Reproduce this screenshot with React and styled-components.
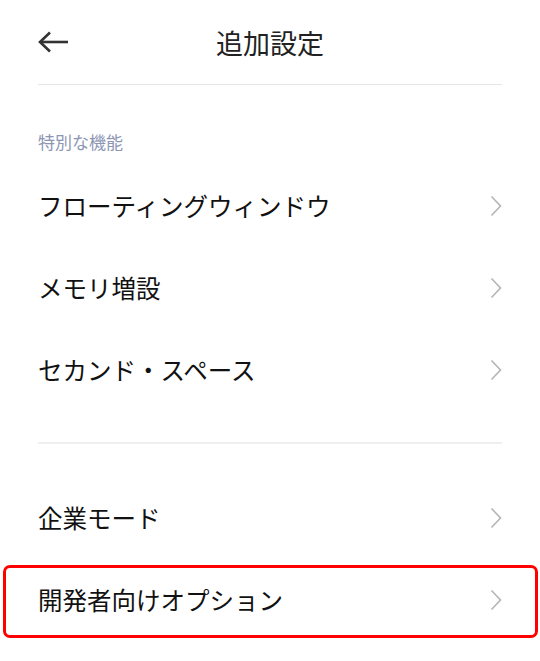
import React from 'react';
import styled, { createGlobalStyle } from 'styled-components';

const GlobalStyle = createGlobalStyle`
  body {
    margin: 0;
    background: #fff;
    font-family: "Noto Sans CJK JP", "Noto Sans", sans-serif;
  }
`;

const Page = styled.div`
  padding: 0 38px;
  width: 540px;
  box-sizing: border-box;
`;

const Header = styled.header`
  position: relative;
  height: 84px;
  display: flex;
  align-items: center;
  justify-content: center;
  border-bottom: 1px solid #e6e6e6;
`;

const BackButton = styled.div`
  position: absolute;
  left: 0;
  top: 31px;
  width: 31px;
  height: 22px;
  display: flex;
`;

const Title = styled.h1`
  margin: 0;
  font-size: 27px;
  font-weight: 400;
  color: #222;
  line-height: 1;
`;

const SectionLabel = styled.div`
  padding: 45px 0 11px;
  font-size: 17px;
  line-height: 24px;
  color: #8c95b4;
`;

const Row = styled.div`
  position: relative;
  height: 82px;
  display: flex;
  align-items: center;
  justify-content: space-between;
`;

const RowText = styled.span`
  font-size: 24.5px;
  color: #111;
  margin-top: -1px;
`;

const Divider = styled.div`
  height: 2px;
  background: #efefef;
  margin: ${(p) => p.$top}px 0 ${(p) => p.$bottom}px;
`;

const Highlight = styled.div`
  position: absolute;
  left: -35px;
  right: -36px;
  top: 6px;
  bottom: 3px;
  border: 3.5px solid #ff0000;
  border-radius: 7px;
  pointer-events: none;
`;

const Chevron = () => (
  <svg width="12" height="22" viewBox="0 0 12 22" fill="none">
    <polyline points="1.5,1.5 10.5,11 1.5,20.5" stroke="#b4b4b4" strokeWidth="1.6" />
  </svg>
);

const BackArrow = () => (
  <svg width="31" height="22" viewBox="0 0 31 22" fill="none">
    <line x1="2" y1="11" x2="30" y2="11" stroke="#333" strokeWidth="2.6" />
    <polyline points="12,1.5 2,11 12,20.5" stroke="#333" strokeWidth="2.6" fill="none" />
  </svg>
);

const Item = ({ label, highlighted }) => (
  <Row>
    <RowText>{label}</RowText>
    <Chevron />
    {highlighted && <Highlight />}
  </Row>
);

const App = () => {
  return (
    <Page>
      <GlobalStyle />
      <Header>
        <BackButton>
          <BackArrow />
        </BackButton>
        <Title>追加設定</Title>
      </Header>
      <SectionLabel>特別な機能</SectionLabel>
      <Item label="フローティングウィンドウ" />
      <Item label="メモリ増設" />
      <Item label="セカンド・スペース" />
      <Divider $top={31} $bottom={33} />
      <Item label="企業モード" />
      <Item label="開発者向けオプション" highlighted />
    </Page>
  );
};

export default App;
